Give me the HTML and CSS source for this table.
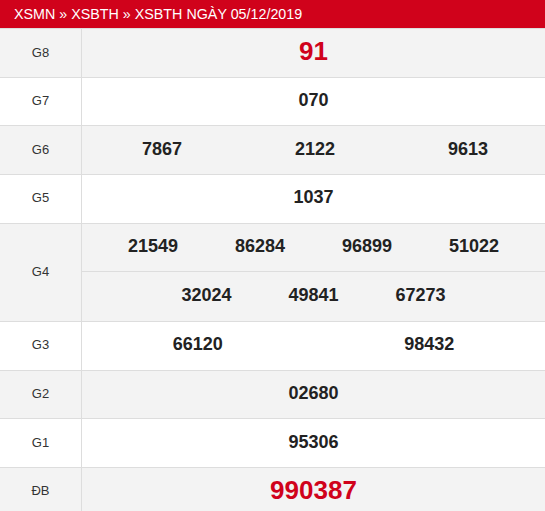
FILE: index.html
```html
<!DOCTYPE html>
<html>
<head>
<meta charset="utf-8">
<link rel="stylesheet" href="styles.css">
</head>
<body>
<div class="board">
  <div class="header">XSMN » XSBTH » XSBTH NGÀY 05/12/2019</div>
  <div class="row grey">
    <div class="label">G8</div>
    <div class="nums"><div class="line"><span class="big">91</span></div></div>
  </div>
  <div class="row">
    <div class="label">G7</div>
    <div class="nums"><div class="line"><span class="num">070</span></div></div>
  </div>
  <div class="row grey">
    <div class="label">G6</div>
    <div class="nums"><div class="line three"><span class="num">7867</span><span class="num">2122</span><span class="num">9613</span></div></div>
  </div>
  <div class="row">
    <div class="label">G5</div>
    <div class="nums"><div class="line"><span class="num">1037</span></div></div>
  </div>
  <div class="row grey">
    <div class="label tall">G4</div>
    <div class="nums">
      <div class="line fixed"><span class="num">21549</span><span class="num">86284</span><span class="num">96899</span><span class="num">51022</span></div>
      <div class="line fixed split"><span class="num">32024</span><span class="num">49841</span><span class="num">67273</span></div>
    </div>
  </div>
  <div class="row">
    <div class="label">G3</div>
    <div class="nums"><div class="line cols"><span class="num">66120</span><span class="num">98432</span></div></div>
  </div>
  <div class="row grey">
    <div class="label">G2</div>
    <div class="nums"><div class="line"><span class="num">02680</span></div></div>
  </div>
  <div class="row">
    <div class="label">G1</div>
    <div class="nums"><div class="line"><span class="num">95306</span></div></div>
  </div>
  <div class="row grey">
    <div class="label">ĐB</div>
    <div class="nums"><div class="line"><span class="big">990387</span></div></div>
  </div>
</div>
</body>
</html>
```
FILE: styles.css
```css
html, body {
  margin: 0;
  padding: 0;
  background: #ffffff;
}
.board {
  width: 545px;
  font-family: "Liberation Sans", Arial, sans-serif;
}
.header {
  height: 28px;
  line-height: 28px;
  background: #d0021b;
  color: #ffffff;
  font-size: 14.3px;
  padding-left: 14px;
  border-bottom: 1px solid #dddddd;
}
.row {
  display: flex;
  border-bottom: 1px solid #dddddd;
  background: #ffffff;
}
.row.grey {
  background: #f3f3f3;
}
.label {
  width: 81px;
  height: 46px;
  border-right: 1px solid #dddddd;
  display: flex;
  align-items: center;
  justify-content: center;
  font-size: 13px;
  color: #333333;
  padding-bottom: 1.67px;
}
.label.tall {
  height: 96px;
  padding-bottom: 1.34px;
}
.nums {
  flex: 1;
  display: flex;
  flex-direction: column;
}
.line {
  box-sizing: border-box;
  height: 47.67px;
  padding-bottom: 2px;
  display: flex;
  align-items: center;
  justify-content: center;
}
.line.split {
  height: 48.67px;
  border-top: 1px solid #dddddd;
}
.cols .num {
  flex: 1;
  text-align: center;
}
.three .num {
  width: 153px;
  text-align: center;
}
.three {
  padding-left: 3px;
}
.fixed .num {
  width: 107px;
  text-align: center;
}
.num {
  font-size: 18px;
  font-weight: bold;
  color: #222222;
}
.big {
  font-size: 26px;
  font-weight: bold;
  color: #d0021b;
}
```
